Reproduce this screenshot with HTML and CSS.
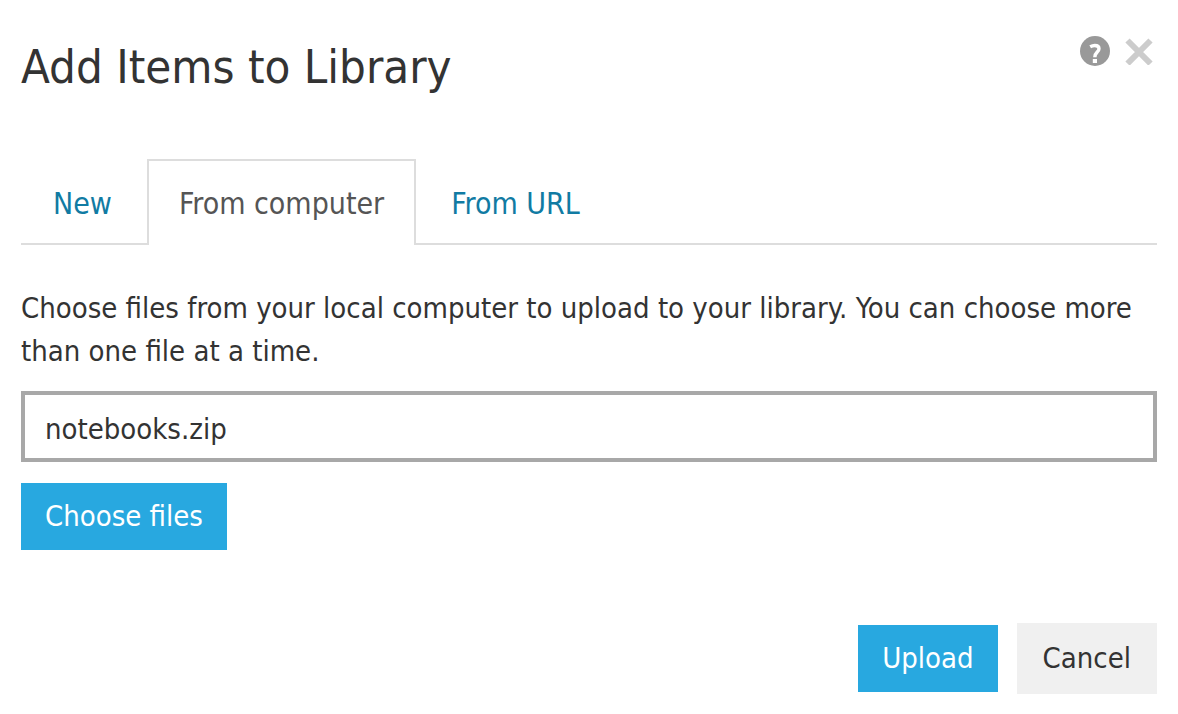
FILE: index.html
```html
<!DOCTYPE html>
<html lang="en">
<head>
<meta charset="utf-8">
<title>Add Items to Library</title>
<link rel="stylesheet" href="styles.css">
</head>
<body>
<main class="dialog">
  <header class="header">
    <h1 class="title">Add Items to Library</h1>
    <div class="tools">
      <button class="icon-button" type="button" aria-label="Help">
        <svg width="30" height="30" viewBox="0 0 30 30" aria-hidden="true">
          <circle cx="15" cy="15" r="15" fill="#999"/>
          <path d="M10.2 10.800C12 9.800 13.300 9.500 14.800 9.500c2.800 0 4.200 1.200 4.200 3.200 0 3.400-4.200 3.500-4.200 8.500" fill="none" stroke="#fff" stroke-width="3.400"/>
          <rect x="12.800" y="23" width="4.200" height="4" fill="#fff"/>
        </svg>
      </button>
      <button class="icon-button" type="button" aria-label="Close">
        <svg width="28" height="28" viewBox="0 0 28 28" aria-hidden="true">
          <path d="M2.500 3.500l23 23M25.500 3.500l-23 23" stroke="#ccc" stroke-width="6"/>
        </svg>
      </button>
    </div>
  </header>
  <nav class="tabs">
    <a class="tab" href="#new">New</a>
    <a class="tab tab-active" href="#computer" aria-current="page">From computer</a>
    <a class="tab" href="#url">From URL</a>
  </nav>
  <form class="form">
    <label class="hint" for="file">Choose files from your local computer to upload to your library. You can choose more than one file at a time.</label>
    <input class="file-name" id="file" type="text" value="notebooks.zip">
    <button class="button button-primary" type="button">Choose files</button>
    <div class="actions">
      <button class="button button-primary" type="submit">Upload</button>
      <button class="button button-cancel" type="button">Cancel</button>
    </div>
  </form>
</main>
</body>
</html>
```
FILE: styles.css
```css
* { box-sizing: border-box; }
body {
  margin: 0;
  background: #fff;
  color: #333;
  font: 29px/43px "DejaVu Sans Condensed", "Noto Sans", sans-serif;
}
.dialog { padding: 36px 21px 20px; }
.header { display: flex; justify-content: space-between; align-items: flex-start; }
.title { margin: 0; font-size: 47px; line-height: 62px; font-weight: 400; }
.tools { display: flex; align-items: center; gap: 15px; padding-right: 4px; }
.icon-button { display: flex; padding: 0; border: 0; background: none; }
.tabs { display: flex; gap: 3px; margin-top: 61px; border-bottom: 2px solid #ddd; font-size: 30px; }
.tab {
  margin-bottom: -2px;
  padding: 21px 30px 20px;
  border: 2px solid transparent;
  border-bottom: 0;
  color: #117ba3;
  text-decoration: none;
}
.tab-active { border-color: #ddd; background: #fff; color: #555; }
.form { display: flex; flex-direction: column; align-items: flex-start; margin-top: 42px; }
.file-name {
  width: 100%;
  height: 71px;
  margin: 18px 0 21px;
  padding: 4px 20px 0;
  border: 4px solid #a8a8a8;
  color: inherit;
  font: inherit;
}
.button { height: 67px; padding: 0 24px; border: 0; font: inherit; }
.button-primary { background: #28a8e0; color: #fff; }
.button-cancel { height: 71px; padding: 0 26px; background: #f0f0f0; color: inherit; }
.actions { display: flex; align-items: center; gap: 19px; align-self: flex-end; margin-top: 73px; }
```
